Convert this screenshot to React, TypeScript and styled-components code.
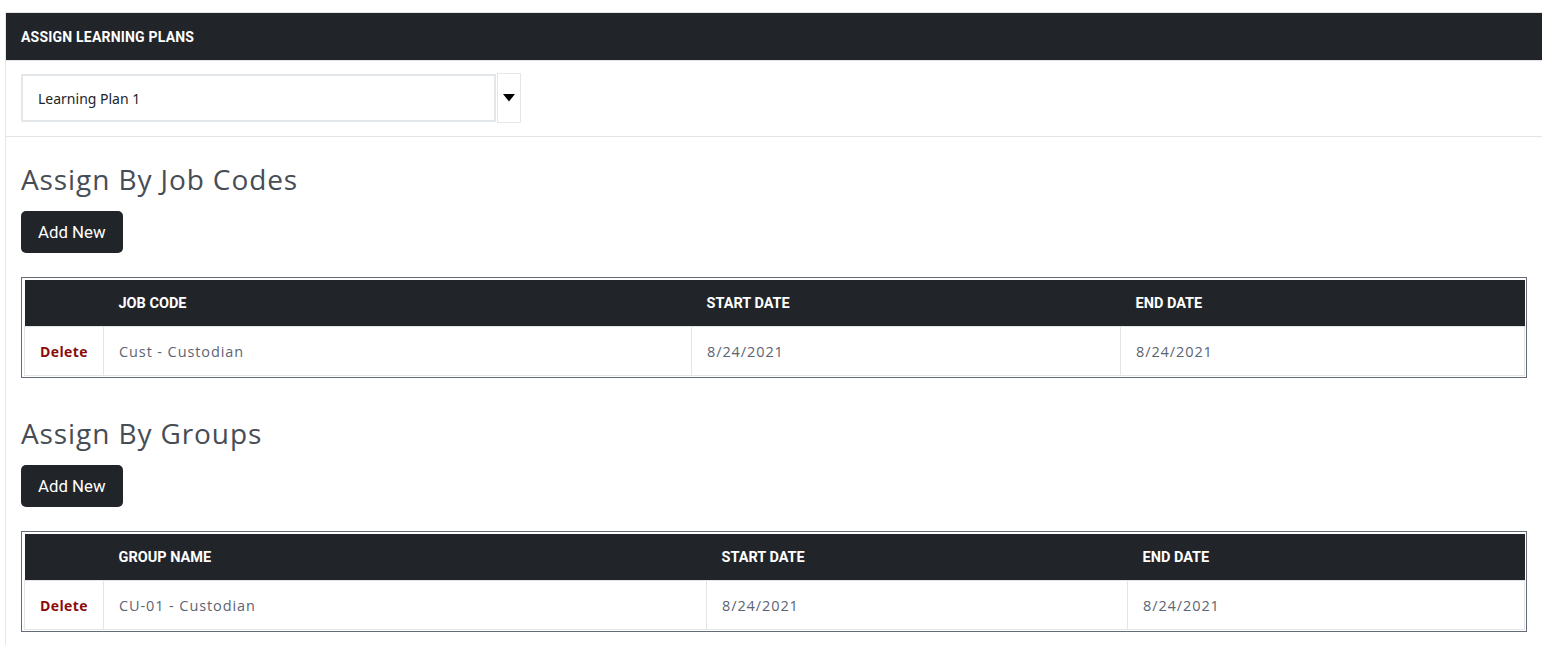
import React from 'react';
import styled, { createGlobalStyle } from 'styled-components';

const GlobalStyle = createGlobalStyle`
  html, body {
    margin: 0;
    padding: 0;
    background: #ffffff;
    overflow-x: hidden;
  }
  body {
    padding: 12px 0 0 5px;
    font-family: 'Open Sans', 'Liberation Sans', sans-serif;
  }
`;

const Card = styled.div`
  box-sizing: border-box;
  width: 1538px;
  border: 1px solid #e6e6e6;
  border-bottom: none;
  background: #ffffff;
  min-height: 640px;
`;

const CardHeader = styled.div`
  background: #212529;
  height: 47px;
  display: flex;
  align-items: center;
  padding: 0 15px;
  border-bottom: 1px solid #e4e4e4;
  color: #ffffff;
  font-family: Roboto, 'Liberation Sans', sans-serif;
  font-weight: 700;
  font-size: 14px;
  letter-spacing: 0.2px;
  text-transform: uppercase;
`;

const PickerRow = styled.div`
  padding: 12px 15px 13px;
  border-bottom: 1px solid #e4e4e4;
`;

const Picker = styled.div`
  display: flex;
  width: 500px;
  height: 50px;
`;

const PickerField = styled.div`
  flex: 1;
  box-sizing: border-box;
  display: flex;
  align-items: center;
  padding: 0 15px;
  margin: 1px 0;
  border: 2px solid #e4e7ea;
  font-family: 'Noto Sans', 'Open Sans', sans-serif;
  font-size: 14px;
  color: #212529;
`;

const PickerArrow = styled.div`
  box-sizing: border-box;
  width: 24px;
  margin-left: 1px;
  border: 1px solid #e4e7ea;
  display: flex;
  align-items: center;
  justify-content: center;
`;

const Content = styled.div`
  padding: 0 15px 20px;
`;

const Section = styled.section<{ $top: number }>`
  margin-top: ${(p) => p.$top}px;
`;

const Heading = styled.h2`
  margin: 0;
  font-family: 'Open Sans', 'Liberation Sans', sans-serif;
  font-weight: 400;
  font-size: 28px;
  line-height: 34px;
  color: #474d55;
  letter-spacing: 0.9px;
`;

const AddButton = styled.button`
  margin-top: 15px;
  height: 42px;
  padding: 0 17px;
  border: none;
  border-radius: 5px;
  background: #212529;
  color: #ffffff;
  font-family: Roboto, 'Liberation Sans', sans-serif;
  font-size: 16.8px;
  cursor: pointer;
`;

const TableFrame = styled.div`
  margin-top: 24px;
  border: 1px solid #646b78;
  padding: 2px 1px 1px 2px;
`;

const Table = styled.table`
  width: 100%;
  table-layout: fixed;
  border-collapse: collapse;
`;

const HeadCell = styled.th`
  background: #212529;
  height: 46px;
  padding: 0 15px;
  text-align: left;
  color: #ffffff;
  font-family: Roboto, 'Liberation Sans', sans-serif;
  font-weight: 700;
  font-size: 14.5px;
  text-transform: uppercase;
`;

const BodyCell = styled.td`
  height: 48px;
  padding: 0 15px;
  border: 1px solid #e2e4e6;
  color: #5d6473;
  font-family: 'Open Sans', 'Liberation Sans', sans-serif;
  font-size: 14.5px;
  letter-spacing: 0.9px;
`;

const DeleteLink = styled.a`
  color: #8b0a0a;
  font-weight: 700;
  font-size: 14px;
  letter-spacing: 0.4px;
  text-decoration: none;
  cursor: pointer;
`;

type Assignment = {
  name: string;
  start: string;
  end: string;
};

interface IAssignTable {
  label: string;
  widths: number[];
  rows: Assignment[];
}

const AssignTable = ({ label, widths, rows }: IAssignTable) => (
  <TableFrame>
    <Table>
      <colgroup>
        {widths.map((w, i) => (
          <col key={i} style={{ width: w }} />
        ))}
      </colgroup>
      <thead>
        <tr>
          <HeadCell />
          <HeadCell>{label}</HeadCell>
          <HeadCell>Start Date</HeadCell>
          <HeadCell>End Date</HeadCell>
        </tr>
      </thead>
      <tbody>
        {rows.map((r) => (
          <tr key={r.name}>
            <BodyCell>
              <DeleteLink>Delete</DeleteLink>
            </BodyCell>
            <BodyCell>{r.name}</BodyCell>
            <BodyCell>{r.start}</BodyCell>
            <BodyCell>{r.end}</BodyCell>
          </tr>
        ))}
      </tbody>
    </Table>
  </TableFrame>
);

const App = () => (
  <>
    <GlobalStyle />
    <Card>
      <CardHeader>Assign Learning Plans</CardHeader>
      <PickerRow>
        <Picker>
          <PickerField>Learning Plan 1</PickerField>
          <PickerArrow>
            <svg width="12" height="8" viewBox="0 0 12 8">
              <path d="M0 0h12L6 7.5z" fill="#000" />
            </svg>
          </PickerArrow>
        </Picker>
      </PickerRow>
      <Content>
        <Section $top={25}>
          <Heading>Assign By Job Codes</Heading>
          <AddButton>Add New</AddButton>
          <AssignTable
            label="Job Code"
            widths={[79, 588, 429, 404]}
            rows={[{ name: 'Cust - Custodian', start: '8/24/2021', end: '8/24/2021' }]}
          />
        </Section>
        <Section $top={38}>
          <Heading>Assign By Groups</Heading>
          <AddButton>Add New</AddButton>
          <AssignTable
            label="Group Name"
            widths={[79, 603, 421, 397]}
            rows={[{ name: 'CU-01 - Custodian', start: '8/24/2021', end: '8/24/2021' }]}
          />
        </Section>
      </Content>
    </Card>
  </>
);

export default App;
